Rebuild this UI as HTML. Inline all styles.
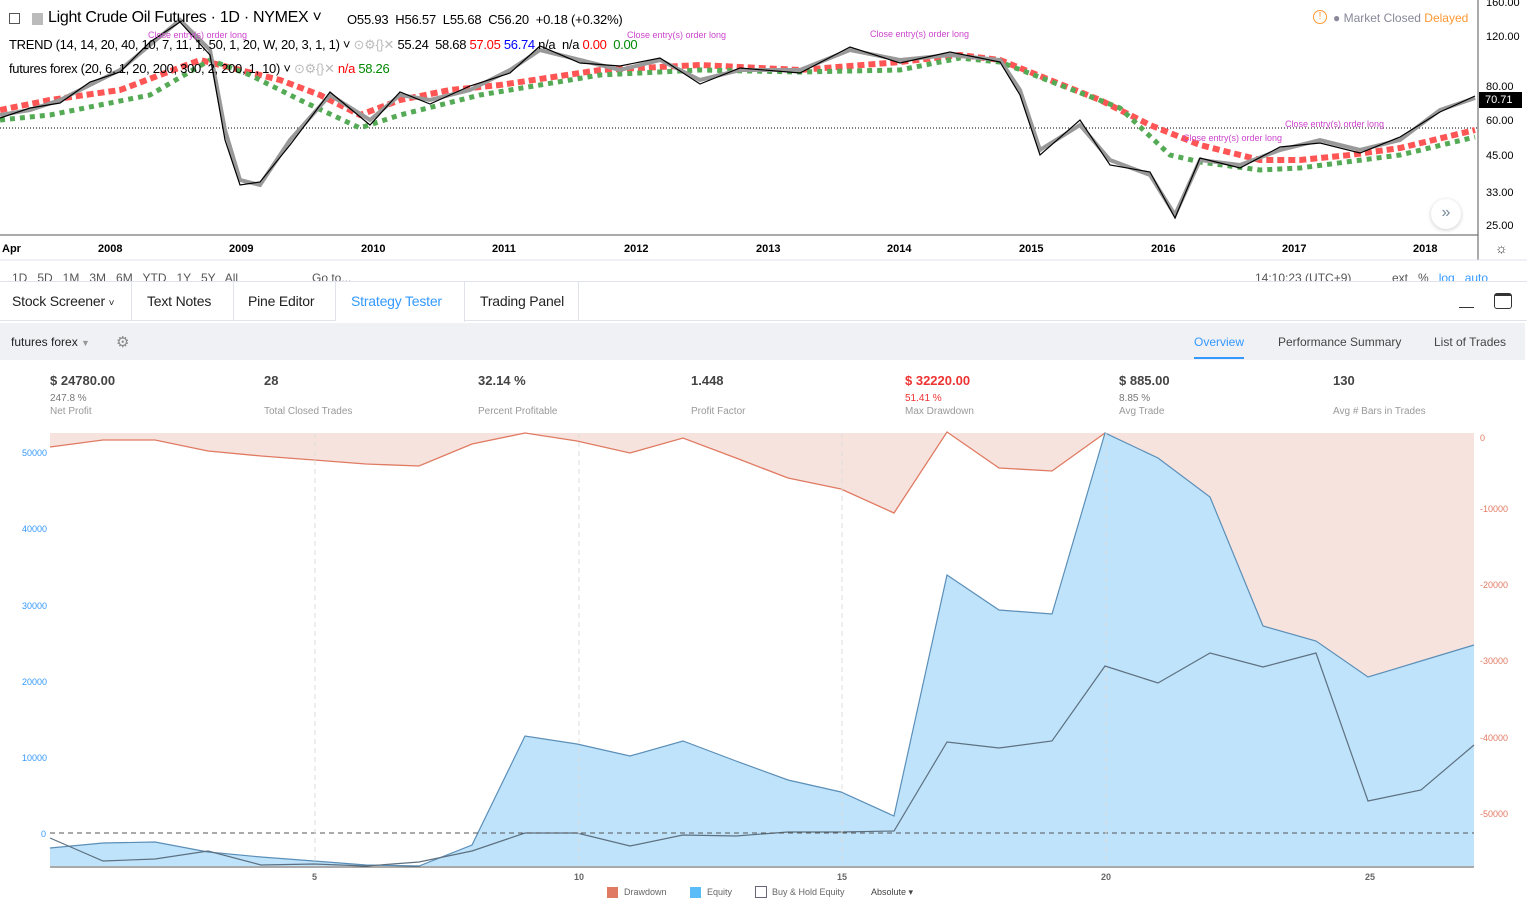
<!DOCTYPE html>
<html><head><meta charset="utf-8"><style>
*{margin:0;padding:0;box-sizing:border-box}
body{width:1527px;height:903px;overflow:hidden;background:#fff;font-family:"Liberation Sans",sans-serif;position:relative;color:#333}
.a{position:absolute;white-space:nowrap}
.lbl{font-size:11px;color:#000;font-weight:bold}
.tab{position:absolute;top:282px;height:39px;border-right:1px solid #e0e3eb;font-size:14px;line-height:38px;padding:0 12px;color:#222;white-space:nowrap;letter-spacing:-0.2px}
.st .v{font-size:13px;font-weight:bold;color:#444;line-height:16px}
.st .p{font-size:10px;color:#777;line-height:14px;margin-top:3px}
.st .n{font-size:10px;color:#999;line-height:12px}
.st{position:absolute;top:373px}
</style></head><body>
<svg class="a" style="left:0;top:0" width="1527" height="903">
<line x1="0" y1="128" x2="1478" y2="128" stroke="#000" stroke-dasharray="1,2" stroke-width="1"/>
<polyline fill="none" stroke="#f55" stroke-width="6" stroke-dasharray="7,4" points="0,110 50,100 120,90 200,60 220,65 280,80 320,95 360,115 400,100 450,90 500,85 600,70 700,65 800,70 900,62 960,55 1000,60 1050,80 1100,100 1150,125 1200,145 1260,160 1300,160 1350,155 1400,148 1475,130"/>
<polyline fill="none" stroke="#5a5" stroke-width="5" stroke-dasharray="5,5" points="0,120 50,115 150,95 210,60 250,75 300,100 360,128 400,115 480,95 600,75 700,70 800,72 900,70 960,58 1000,62 1060,85 1120,108 1170,155 1200,162 1260,170 1300,168 1400,155 1475,137"/>
<polyline fill="none" stroke="#999" stroke-width="4" points="0,115 30,110 60,100 90,85 120,70 150,45 180,20 210,50 225,130 240,180 260,185 290,140 330,95 370,120 400,95 430,100 470,90 510,70 540,50 580,60 620,70 660,60 700,80 740,70 800,70 850,50 900,60 950,55 1000,60 1020,90 1040,150 1080,125 1110,160 1150,175 1175,215 1200,160 1240,165 1280,150 1320,140 1360,150 1400,140 1440,110 1475,98"/>
<polyline fill="none" stroke="#000" stroke-width="1.2" points="0,118 30,108 60,103 90,82 120,72 150,42 180,22 210,55 225,140 240,185 260,182 290,145 330,92 370,125 400,92 430,104 470,86 510,73 540,46 580,63 620,66 660,58 700,84 740,68 800,73 850,47 900,63 950,52 1000,62 1020,95 1040,155 1080,120 1110,165 1150,172 1175,218 1200,158 1240,168 1280,147 1320,143 1360,153 1400,137 1440,112 1475,96"/>
<line x1="1478" y1="0" x2="1478" y2="260" stroke="#555"/>
<line x1="0" y1="235" x2="1478" y2="235" stroke="#555"/>
<line x1="0" y1="260" x2="1527" y2="260" stroke="#e0e3eb"/>
<polygon fill="#f7e3de" points="50,433 1474,433 1474,645 1421,661 1368,677 1316,641 1263,626 1210,497 1158,458 1105,433 1052,471 999,468 947,432 894,513 841,489 788,478 736,458 683,438 630,453 577,441 525,433 472,444 419,466 366,464 314,460 261,456 208,451 155,440 103,440 50,447"/>
<polyline fill="none" stroke="#e07a62" stroke-width="1.3" points="50,447 103,440 155,440 208,451 261,456 314,460 366,464 419,466 472,444 525,433 577,441 630,453 683,438 736,458 788,478 841,489 894,513 947,432 999,468 1052,471 1105,433"/>
<polygon fill="#bfe3fb" points="50,848 103,843 155,842 208,852 261,857 314,861 366,865 419,866 472,845 525,736 577,744 630,756 683,741 736,761 788,780 841,792 894,816 947,575 999,610 1052,614 1105,433 1158,458 1210,497 1263,626 1316,641 1368,677 1421,661 1474,645 1474,866 50,866"/>
<polyline fill="none" stroke="#5b8fb8" stroke-width="1.2" points="50,848 103,843 155,842 208,852 261,857 314,861 366,865 419,866 472,845 525,736 577,744 630,756 683,741 736,761 788,780 841,792 894,816 947,575 999,610 1052,614 1105,433 1158,458 1210,497 1263,626 1316,641 1368,677 1421,661 1474,645"/>
<polyline fill="none" stroke="#5d7080" stroke-width="1.2" points="50,838 103,861 155,859 208,851 261,865 314,864 366,866 419,862 472,851 525,833 577,833 630,846 683,835 736,836 788,832 841,832 894,831 947,742 999,748 1052,741 1105,666 1158,683 1210,653 1263,667 1316,653 1368,801 1421,790 1474,745"/>
<line x1="50" y1="833" x2="1474" y2="833" stroke="#555" stroke-dasharray="5,4"/>
<g stroke="#ddd" stroke-dasharray="5,4"><line x1="315" y1="433" x2="315" y2="866"/><line x1="579" y1="433" x2="579" y2="866"/><line x1="842" y1="433" x2="842" y2="866"/><line x1="1106" y1="433" x2="1106" y2="866"/></g>
<line x1="50" y1="867" x2="1474" y2="867" stroke="#555"/>
</svg>
<div class="a" style="left:9px;top:13px;width:11px;height:11px;border:1px solid #555"></div>
<div class="a" style="left:32px;top:13px;width:11px;height:12px;background:#bbb"></div>
<div class="a" style="left:48px;top:9px;font-size:16px;color:#000;letter-spacing:-0.3px">Light Crude Oil Futures · 1D · NYMEX ˅</div>
<div class="a" style="left:347px;top:12px;font-size:13px;color:#000;letter-spacing:-0.2px">O55.93 &nbsp;H56.57 &nbsp;L55.68 &nbsp;C56.20 &nbsp;+0.18 (+0.32%)</div>
<div class="a" style="left:9px;top:37px;font-size:13px;color:#000;letter-spacing:-0.3px">TREND (14, 14, 20, 40, 10, 7, 11, 1, 50, 1, 20, W, 20, 3, 1, 1) ˅ <span style="color:#bbb">⊙⚙{}✕</span> 55.24 &nbsp;58.68 <span style="color:#f00">57.05</span> <span style="color:#00f">56.74</span> n/a &nbsp;n/a <span style="color:#f00">0.00</span> &nbsp;<span style="color:#080">0.00</span></div>
<div class="a" style="left:9px;top:61px;font-size:13px;color:#000;letter-spacing:-0.3px">futures forex (20, 6, 1, 20, 200, 300, 2, 200, 1, 10) ˅ <span style="color:#bbb">⊙⚙{}✕</span> <span style="color:#f00">n/a</span> <span style="color:#080">58.26</span></div>
<div class="a" style="left:148px;top:30px;font-size:9px;color:#c4c">Close entry(s) order long</div>
<div class="a" style="left:627px;top:30px;font-size:9px;color:#c4c">Close entry(s) order long</div>
<div class="a" style="left:870px;top:29px;font-size:9px;color:#c4c">Close entry(s) order long</div>
<div class="a" style="left:1285px;top:119px;font-size:9px;color:#c4c">Close entry(s) order long</div>
<div class="a" style="left:1183px;top:133px;font-size:9px;color:#c4c">Close entry(s) order long</div>
<div class="a" style="left:1313px;top:10px;width:14px;height:14px;border:1.5px solid #f93;border-radius:50%;font-size:10px;color:#f93;text-align:center;line-height:11px">!</div>
<div class="a" style="left:1333px;top:11px;font-size:12px;color:#889">● Market Closed <span style="color:#f93">Delayed</span></div>
<div class="a" style="left:1486px;top:-3px;font-size:11px;color:#000">160.00</div>
<div class="a" style="left:1486px;top:31px;font-size:11px;color:#000">120.00</div>
<div class="a" style="left:1486px;top:81px;font-size:11px;color:#000">80.00</div>
<div class="a" style="left:1479px;top:92px;width:43px;height:16px;background:#000;color:#fff;font-size:11px;line-height:16px;padding-left:6px">70.71</div>
<div class="a" style="left:1486px;top:115px;font-size:11px;color:#000">60.00</div>
<div class="a" style="left:1486px;top:150px;font-size:11px;color:#000">45.00</div>
<div class="a" style="left:1486px;top:187px;font-size:11px;color:#000">33.00</div>
<div class="a" style="left:1486px;top:220px;font-size:11px;color:#000">25.00</div>
<div class="a" style="left:1431px;top:199px;width:30px;height:30px;border-radius:50%;background:#fff;box-shadow:0 1px 4px #ccc;text-align:center;line-height:28px;color:#789;font-size:16px">»</div>
<div class="a" style="left:1495px;top:240px;font-size:14px;color:#333">☼</div>
<div class="a lbl" style="left:2px;top:243px">Apr</div>
<div class="a lbl" style="left:98px;top:243px">2008</div>
<div class="a lbl" style="left:229px;top:243px">2009</div>
<div class="a lbl" style="left:361px;top:243px">2010</div>
<div class="a lbl" style="left:492px;top:243px">2011</div>
<div class="a lbl" style="left:624px;top:243px">2012</div>
<div class="a lbl" style="left:756px;top:243px">2013</div>
<div class="a lbl" style="left:887px;top:243px">2014</div>
<div class="a lbl" style="left:1019px;top:243px">2015</div>
<div class="a lbl" style="left:1151px;top:243px">2016</div>
<div class="a lbl" style="left:1282px;top:243px">2017</div>
<div class="a lbl" style="left:1413px;top:243px">2018</div>
<div class="a" style="left:0;top:262px;width:1527px;height:20px;overflow:hidden;font-size:12px;color:#555">
<span class="a" style="left:12px;top:9px">1D &nbsp; 5D &nbsp; 1M &nbsp; 3M &nbsp; 6M &nbsp; YTD &nbsp; 1Y &nbsp; 5Y &nbsp; All</span>
<span class="a" style="left:312px;top:9px">Go to...</span>
<span class="a" style="left:1255px;top:9px">14:10:23 (UTC+9)</span>
<span class="a" style="left:1392px;top:9px">ext &nbsp; % &nbsp; <span style="color:#39f">log &nbsp; auto</span></span>
</div>
<div class="a" style="left:0;top:281px;width:1527px;height:1px;background:#e0e3eb"></div>
<div class="a" style="left:0;top:320px;width:1527px;height:1px;background:#e0e3eb"></div>
<div class="tab" style="left:0;width:132px">Stock Screener <span style="font-size:10px">˅</span></div>
<div class="tab" style="left:132px;width:102px;padding-left:15px">Text Notes</div>
<div class="tab" style="left:234px;width:102px;padding-left:14px">Pine Editor</div>
<div class="tab" style="left:336px;width:129px;padding-left:15px;color:#39f;background:#fff;height:40px">Strategy Tester</div>
<div class="tab" style="left:465px;width:114px;padding-left:15px">Trading Panel</div>
<div class="a" style="left:1459px;top:307px;width:15px;height:1px;background:#333"></div>
<div class="a" style="left:1494px;top:293px;width:18px;height:16px;border:1.5px solid #333;border-radius:3px;border-top-width:3px"></div>
<div class="a" style="left:0;top:323px;width:1525px;height:37px;background:#f0f1f5"></div>
<div class="a" style="left:11px;top:335px;font-size:12px;color:#222">futures forex <span style="color:#999;font-size:9px">▼</span></div>
<div class="a" style="left:116px;top:333px;font-size:15px;color:#888">⚙</div>
<div class="a" style="left:1194px;top:335px;font-size:12px;color:#39f">Overview</div>
<div class="a" style="left:1194px;top:357px;width:50px;height:2px;background:#39f"></div>
<div class="a" style="left:1278px;top:335px;font-size:12px;color:#444">Performance Summary</div>
<div class="a" style="left:1434px;top:335px;font-size:12px;color:#444">List of Trades</div>
<div class="st" style="left:50px"><div class="v">$ 24780.00</div><div class="p">247.8 %</div><div class="n">Net Profit</div></div>
<div class="st" style="left:264px"><div class="v">28</div><div class="p">&nbsp;</div><div class="n">Total Closed Trades</div></div>
<div class="st" style="left:478px"><div class="v">32.14 %</div><div class="p">&nbsp;</div><div class="n">Percent Profitable</div></div>
<div class="st" style="left:691px"><div class="v">1.448</div><div class="p">&nbsp;</div><div class="n">Profit Factor</div></div>
<div class="st" style="left:905px"><div class="v" style="color:#e33">$ 32220.00</div><div class="p" style="color:#e33">51.41 %</div><div class="n">Max Drawdown</div></div>
<div class="st" style="left:1119px"><div class="v">$ 885.00</div><div class="p">8.85 %</div><div class="n">Avg Trade</div></div>
<div class="st" style="left:1333px"><div class="v">130</div><div class="p">&nbsp;</div><div class="n">Avg # Bars in Trades</div></div>
<div class="a" style="left:22px;top:448px;font-size:9px;color:#39f">50000</div>
<div class="a" style="left:22px;top:524px;font-size:9px;color:#39f">40000</div>
<div class="a" style="left:22px;top:601px;font-size:9px;color:#39f">30000</div>
<div class="a" style="left:22px;top:677px;font-size:9px;color:#39f">20000</div>
<div class="a" style="left:22px;top:753px;font-size:9px;color:#39f">10000</div>
<div class="a" style="left:41px;top:829px;font-size:9px;color:#39f">0</div>
<div class="a" style="left:1480px;top:433px;font-size:9px;color:#e07a62">0</div>
<div class="a" style="left:1480px;top:504px;font-size:9px;color:#e07a62">-10000</div>
<div class="a" style="left:1480px;top:580px;font-size:9px;color:#e07a62">-20000</div>
<div class="a" style="left:1480px;top:656px;font-size:9px;color:#e07a62">-30000</div>
<div class="a" style="left:1480px;top:733px;font-size:9px;color:#e07a62">-40000</div>
<div class="a" style="left:1480px;top:809px;font-size:9px;color:#e07a62">-50000</div>
<div class="a" style="left:312px;top:872px;font-size:9px;color:#666;font-weight:bold">5</div>
<div class="a" style="left:574px;top:872px;font-size:9px;color:#666;font-weight:bold">10</div>
<div class="a" style="left:837px;top:872px;font-size:9px;color:#666;font-weight:bold">15</div>
<div class="a" style="left:1101px;top:872px;font-size:9px;color:#666;font-weight:bold">20</div>
<div class="a" style="left:1365px;top:872px;font-size:9px;color:#666;font-weight:bold">25</div>
<div class="a" style="left:607px;top:887px;width:11px;height:11px;background:#e07a62"></div>
<div class="a" style="left:624px;top:887px;font-size:9px;color:#666">Drawdown</div>
<div class="a" style="left:690px;top:887px;width:11px;height:11px;background:#5bbdf8"></div>
<div class="a" style="left:707px;top:887px;font-size:9px;color:#666">Equity</div>
<div class="a" style="left:755px;top:886px;width:12px;height:12px;border:1px solid #667"></div>
<div class="a" style="left:772px;top:887px;font-size:9px;color:#666">Buy &amp; Hold Equity</div>
<div class="a" style="left:871px;top:887px;font-size:9px;color:#444">Absolute ▾</div>
</body></html>
